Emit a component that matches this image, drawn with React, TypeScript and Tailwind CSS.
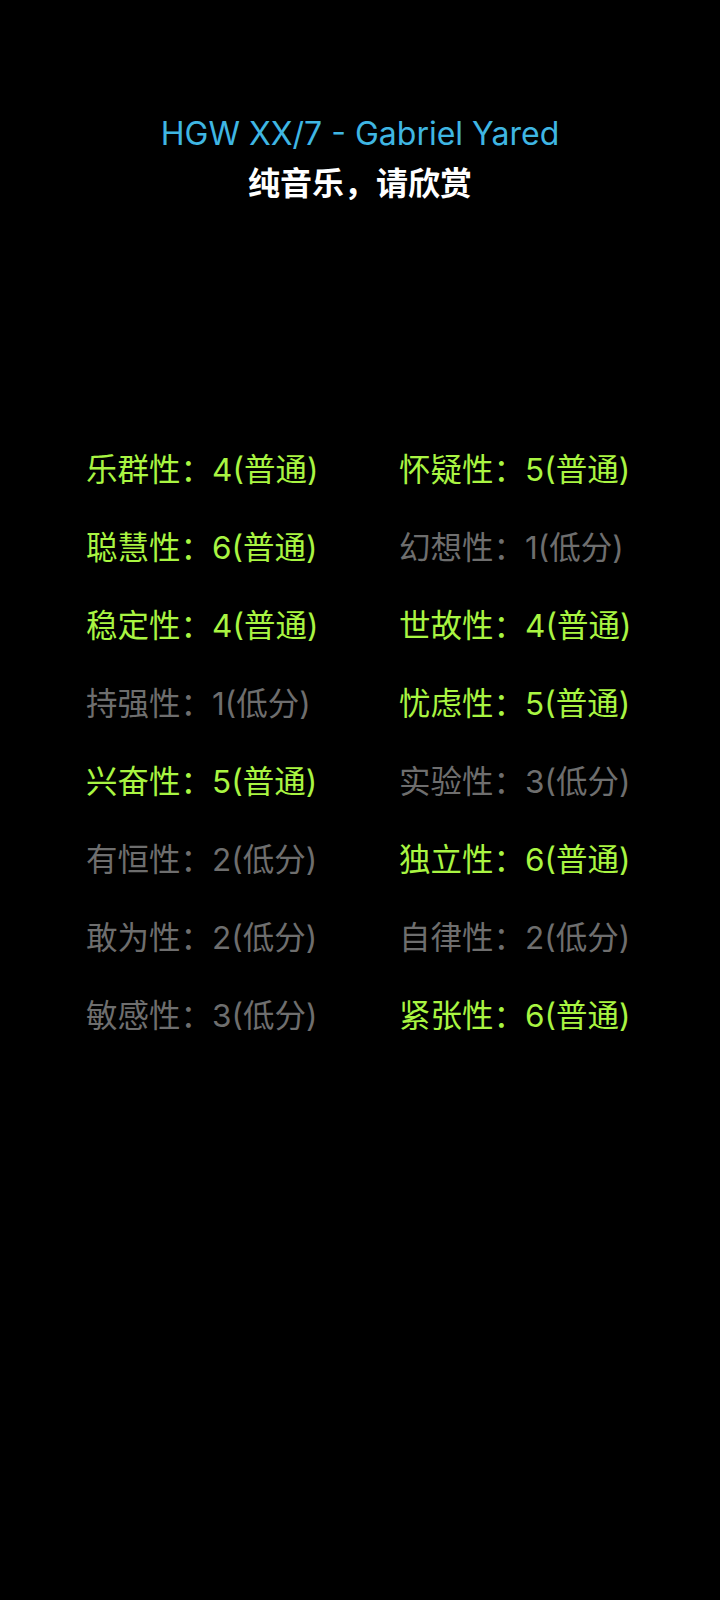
const traits: [string, number, boolean][] = [
  ["乐群性", 4, true],
  ["怀疑性", 5, true],
  ["聪慧性", 6, true],
  ["幻想性", 1, false],
  ["稳定性", 4, true],
  ["世故性", 4, true],
  ["持强性", 1, false],
  ["忧虑性", 5, true],
  ["兴奋性", 5, true],
  ["实验性", 3, false],
  ["有恒性", 2, false],
  ["独立性", 6, true],
  ["敢为性", 2, false],
  ["自律性", 2, false],
  ["敏感性", 3, false],
  ["紧张性", 6, true],
];

export default function App() {
  return (
    <div
      className="min-h-[1600px] w-[720px] bg-black"
      style={{ fontFamily: '"Inter", "Noto Sans CJK SC", sans-serif' }}
    >
      <div className="pt-[112px] flex flex-col items-center">
        <div className="text-[32px] leading-[44px] text-[#3fb6e3]">HGW XX/7 - Gabriel Yared</div>
        <div className="mt-[6px] text-[32px] leading-[44px] font-bold text-white">纯音乐，请欣赏</div>
      </div>
      <div className="mt-[242px] grid grid-cols-[313px_1fr] gap-y-[34px] pl-[86px]">
        {traits.map(([name, score, normal]) => (
          <div
            key={name}
            className={
              "text-[31.5px] leading-[44px] whitespace-nowrap " +
              (normal ? "text-[#a9f542]" : "text-[#6e6e6e]")
            }
          >
            {name}：{score}({normal ? "普通" : "低分"})
          </div>
        ))}
      </div>
    </div>
  );
}
